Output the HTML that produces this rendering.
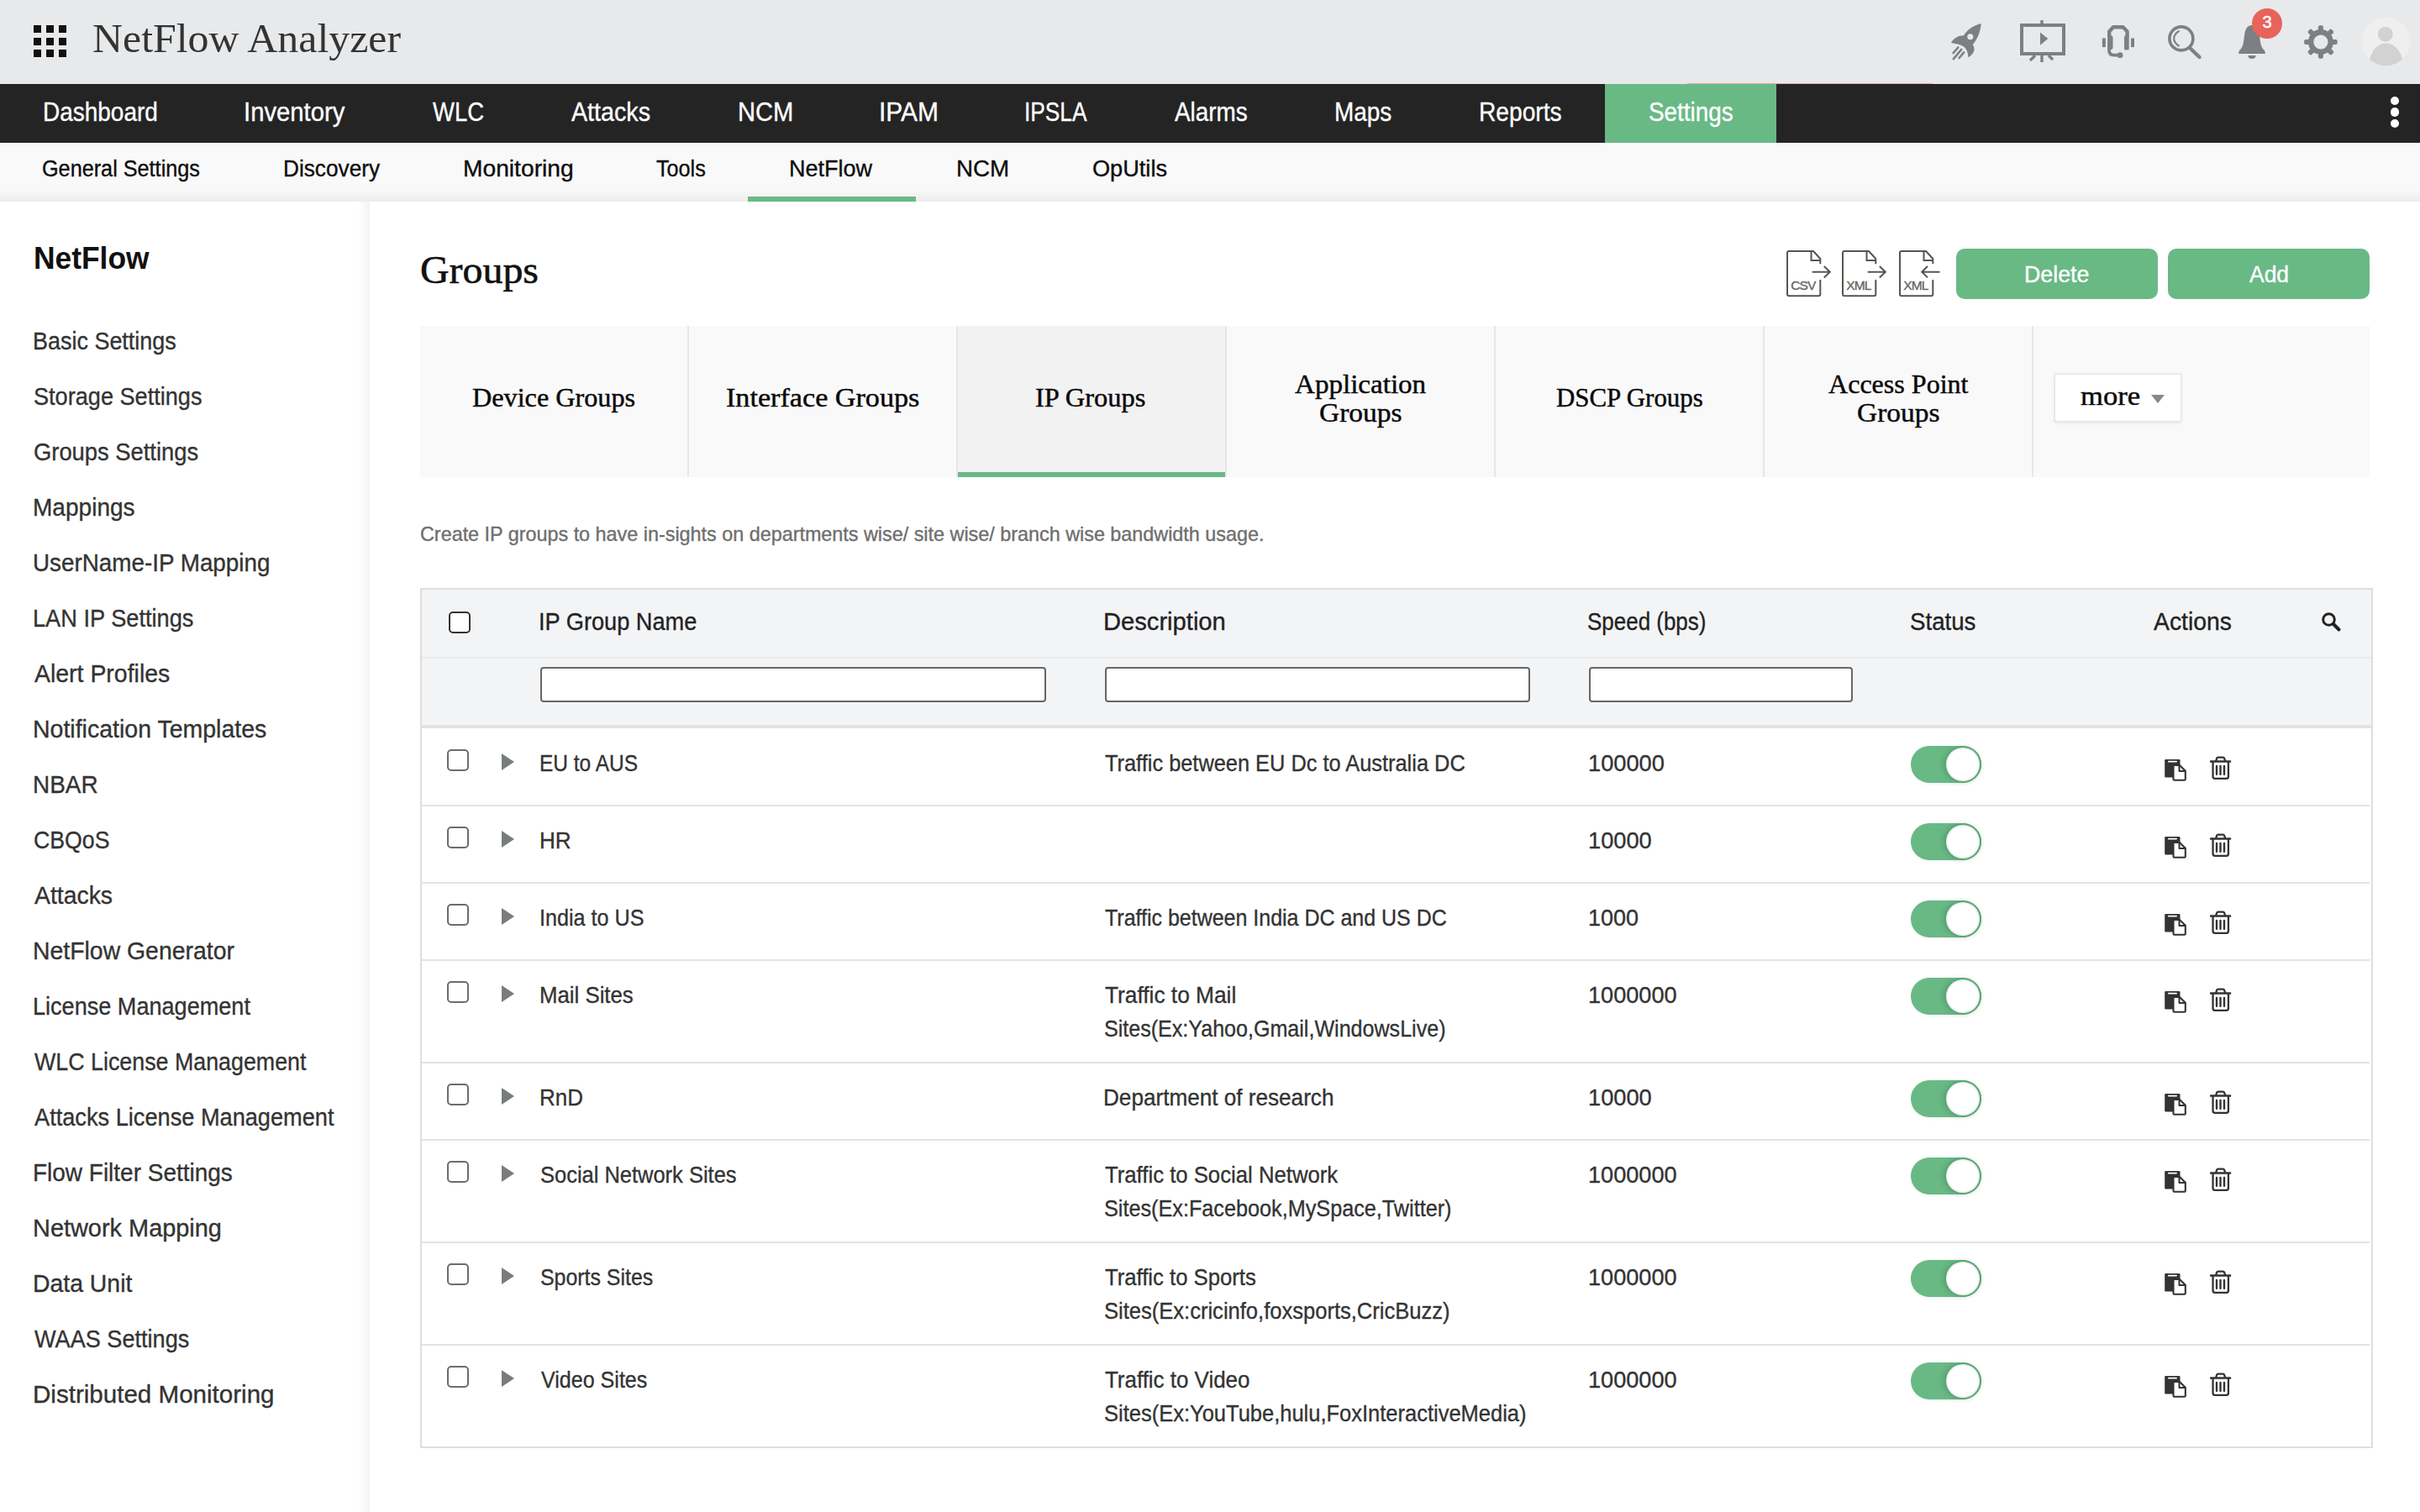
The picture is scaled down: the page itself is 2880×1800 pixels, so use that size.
<!DOCTYPE html>
<html><head><meta charset="utf-8"><title>NetFlow Analyzer</title>
<style>
*{box-sizing:border-box;margin:0;padding:0}
html,body{width:2880px;height:1800px;overflow:hidden;background:#fff;font-family:"Liberation Sans",sans-serif;}
.a{position:absolute;white-space:nowrap}
.tx{-webkit-text-stroke:0.35px currentColor}
#hdr{position:absolute;left:0;top:0;width:2880px;height:100px;background:#e8e9eb}
#nav{position:absolute;left:0;top:100px;width:2880px;height:70px;background:#242424}
.nv{position:absolute;top:0;height:70px;color:#fff;font-size:30px;line-height:70px;text-align:center;letter-spacing:-0.9px;white-space:nowrap}
.nact{background:#69b985}
#sub{position:absolute;left:0;top:170px;width:2880px;height:70px;background:linear-gradient(#f9f9f9 0,#f9f9f9 56px,#ededed 70px)}
.sv{position:absolute;top:0;height:70px;color:#111;font-size:27px;line-height:70px;text-align:center;letter-spacing:-0.7px;white-space:nowrap}
#side{position:absolute;left:0;top:240px;width:440px;height:1560px;background:#fff;box-shadow:inset -16px 0 14px -12px rgba(0,0,0,0.07)}
.sh{position:absolute;left:40px;font-size:36px;font-weight:bold;color:#111;letter-spacing:-0.2px}
.si{position:absolute;left:40px;font-size:28px;color:#333;letter-spacing:-0.6px;white-space:nowrap;line-height:34px}
.serif{font-family:"Liberation Serif",serif}
.btn{position:absolute;top:296px;width:240px;height:60px;border-radius:10px;background:#69b985;color:#fff;font-size:28px;line-height:60px;text-align:center;letter-spacing:-0.5px}
#tabs{position:absolute;left:500px;top:388px;width:2320px;height:180px;background:#f9f9f9}
.tb{position:absolute;top:0;height:180px;width:320px;border-right:2px solid #e6e6e6;display:flex;align-items:center;justify-content:center;text-align:center;font-family:"Liberation Serif",serif;font-size:32px;line-height:34px;color:#111}
.tact{background:#f2f2f2}
.desc{position:absolute;left:500px;font-size:24px;color:#666;letter-spacing:-0.3px;line-height:30px}
#tbl{position:absolute;left:500px;top:700px;width:2322px;height:1023px;border:2px solid #e3e3e3}
.th{position:absolute;font-size:28px;color:#222;letter-spacing:-0.6px;line-height:34px}
.inp{position:absolute;top:794px;height:42px;border:2px solid #666;border-radius:4px;background:#fff}
.row{position:absolute;left:502px;width:2318px;border-top:2px solid #e3e3e3}
.td{position:absolute;font-size:28px;color:#333;letter-spacing:-0.6px;line-height:40px;white-space:nowrap}
.cb{position:absolute;width:26px;height:26px;border:2px solid #6c6c6c;border-radius:5px;background:#fff}
.tri{position:absolute;width:0;height:0;border-top:10px solid transparent;border-bottom:10px solid transparent;border-left:15px solid #787c7b}
.tg{position:absolute;width:84px;height:44px;border-radius:22px;background:#69b985}
.tg{box-shadow:1px 1px 5px rgba(0,0,0,0.07)}
.tg i{position:absolute;right:2px;top:2px;width:40px;height:40px;border-radius:50%;background:#fff;box-shadow:inset 0 0 1px 1.5px rgba(0,0,0,0.07), 0 0 0 2px #58a874, -3px 0 7px rgba(0,60,20,0.20)}
@media (max-width:1500px){html{zoom:0.5}}
</style></head>
<body>

<div id="hdr">
<div class="a" style="left:40px;top:30px;width:9px;height:9px;background:#111"></div><div class="a" style="left:55px;top:30px;width:9px;height:9px;background:#111"></div><div class="a" style="left:70px;top:30px;width:9px;height:9px;background:#111"></div><div class="a" style="left:40px;top:45px;width:9px;height:9px;background:#111"></div><div class="a" style="left:55px;top:45px;width:9px;height:9px;background:#111"></div><div class="a" style="left:70px;top:45px;width:9px;height:9px;background:#111"></div><div class="a" style="left:40px;top:59px;width:9px;height:9px;background:#111"></div><div class="a" style="left:55px;top:59px;width:9px;height:9px;background:#111"></div><div class="a" style="left:70px;top:59px;width:9px;height:9px;background:#111"></div>
<div class="a" style="left:109.96px;top:15.80px;font-family:'Liberation Serif';font-size:48px;line-height:60px;color:#333;transform-origin:0 0;transform:scaleX(1.0391);">NetFlow Analyzer</div>
<!-- rocket -->
<svg class="a" style="left:2315px;top:22px" width="50" height="55" viewBox="0 0 50 55">
 <path fill="#7c8085" d="M42.7 6 C36 7.5 27 12 21.8 20.4 C17 20 10 23 6.9 29.1 C12 30 18 31 22 33.5 C25 36 27.3 40 27.3 46.5 C31 44 35 40 34.5 36.4 C34.3 34 33.5 32.5 32.7 31.3 C38 25 42 16 42.7 6 Z"/>
 <circle cx="29.8" cy="21.8" r="3.5" fill="#e8e9eb"/>
 <path stroke="#7c8085" stroke-width="2.6" stroke-linecap="round" d="M9.5 41.1 L15.3 34.5 M9.8 48.2 L19.3 36.9 M16.6 47 L22.2 40.4"/>
</svg>
<!-- presentation -->
<svg class="a" style="left:2402px;top:22px" width="58" height="54" viewBox="0 0 58 54">
 <rect x="4" y="8" width="50" height="34" fill="none" stroke="#7c8085" stroke-width="4"/>
 <rect x="26.3" y="2" width="3.4" height="5" fill="#7c8085"/>
 <path fill="#7c8085" d="M26 16.5 L35.3 24 L26 31.7 Z"/>
 <path stroke="#7c8085" stroke-width="3.4" d="M28 44 V52 M20 44 L14 50 M36 44 L41 49"/>
</svg>
<!-- headset -->
<svg class="a" style="left:2495px;top:25px" width="50" height="50" viewBox="0 0 50 50">
 <path fill="none" stroke="#7c8085" stroke-width="4.4" stroke-linejoin="round" d="M15.2 19 V12.5 L20 7.3 H31.5 L36.6 12.5 V19"/>
 <rect x="13.1" y="17.2" width="6.4" height="16.8" rx="2.5" fill="#7c8085"/>
 <rect x="33" y="17.2" width="5.7" height="17.2" rx="1.5" fill="#7c8085"/>
 <rect x="6.9" y="20.5" width="4" height="10.6" fill="#7c8085"/>
 <rect x="41" y="20.5" width="4" height="10.6" fill="#7c8085"/>
 <path fill="none" stroke="#7c8085" stroke-width="3.8" d="M15 32 V35 C15 39 17 40.7 21 40.7 H27"/>
 <circle cx="28.1" cy="40.7" r="3.4" fill="#7c8085"/>
</svg>
<!-- search -->
<svg class="a" style="left:2576px;top:26px" width="48" height="48" viewBox="0 0 48 48">
 <circle cx="19.9" cy="19.9" r="14" fill="none" stroke="#7c8085" stroke-width="3.6"/>
 <path fill="none" stroke="#7c8085" stroke-width="2.2" d="M17.6 10.8 C13 13.5 11.2 16.5 11.2 19.9 C11.2 23.3 13 26.3 17.6 29"/>
 <path stroke="#7c8085" stroke-width="4.4" stroke-linecap="round" d="M30 31 L41.5 42"/>
</svg>
<!-- bell -->
<svg class="a" style="left:2660px;top:26px" width="42" height="48" viewBox="0 0 42 48">
 <path fill="#7c8085" d="M20 4 C14 4 12 9 11 16 C10 26 9 31 5 34 L4 38 H36 L35 34 C31 31 30 26 29 16 C28 9 26 4 20 4 Z"/>
 <path fill="#7c8085" d="M15.5 40 H24.5 C24.5 43 22.5 44 20 44 C17.5 44 15.5 43 15.5 40 Z"/>
</svg>
<div class="a" style="left:2680px;top:9.6px;width:36px;height:36px;border-radius:50%;background:#e8635a;color:#fff;font-size:20px;line-height:33px;text-align:center;-webkit-text-stroke:0.6px #fff">3</div>
<!-- gear -->
<svg class="a" style="left:2738px;top:26px" width="48" height="48" viewBox="0 0 48 48">
 <g transform="translate(23.9,24)" fill="#7c8085">
  <rect x="-3" y="-19.8" width="6" height="39.6" rx="2"/>
  <rect x="-3" y="-19.8" width="6" height="39.6" rx="2" transform="rotate(45)"/>
  <rect x="-3" y="-19.8" width="6" height="39.6" rx="2" transform="rotate(90)"/>
  <rect x="-3" y="-19.8" width="6" height="39.6" rx="2" transform="rotate(135)"/>
  <circle r="15"/>
  <circle r="8.6" fill="#e8e9eb"/>
 </g>
</svg>
<!-- avatar -->
<svg class="a" style="left:2810px;top:20px" width="60" height="60" viewBox="0 0 60 60">
 <defs><clipPath id="avc"><circle cx="29.4" cy="29.4" r="28.7"/></clipPath></defs>
 <circle cx="29.4" cy="29.4" r="28.7" fill="#efefef"/>
 <g clip-path="url(#avc)" fill="#d2d2d2">
  <circle cx="28.8" cy="20.7" r="9"/>
  <ellipse cx="29.6" cy="58" rx="20.3" ry="26.5"/>
 </g>
</svg>
</div>
<div class="a" style="left:0;top:100px;width:2880px;height:70px;background:#242424"></div><div class="a" style="left:2008px;top:99px;width:292px;height:1px;background:#e6aca5"></div><div class="a" style="left:1910px;top:100px;width:203.6px;height:70px;background:#69b985"></div><div class="a tx" style="left:50.80px;top:113.86px;font-family:'Liberation Sans';font-size:31px;line-height:39px;color:#fff;transform-origin:0 0;transform:scaleX(0.9022);">Dashboard</div><div class="a tx" style="left:289.71px;top:113.86px;font-family:'Liberation Sans';font-size:31px;line-height:39px;color:#fff;transform-origin:0 0;transform:scaleX(0.9444);">Inventory</div><div class="a tx" style="left:514.70px;top:113.86px;font-family:'Liberation Sans';font-size:31px;line-height:39px;color:#fff;transform-origin:0 0;transform:scaleX(0.8861);">WLC</div><div class="a tx" style="left:680.00px;top:113.86px;font-family:'Liberation Sans';font-size:31px;line-height:39px;color:#fff;transform-origin:0 0;transform:scaleX(0.9244);">Attacks</div><div class="a tx" style="left:877.82px;top:113.86px;font-family:'Liberation Sans';font-size:31px;line-height:39px;color:#fff;transform-origin:0 0;transform:scaleX(0.9390);">NCM</div><div class="a tx" style="left:1046.47px;top:113.86px;font-family:'Liberation Sans';font-size:31px;line-height:39px;color:#fff;transform-origin:0 0;transform:scaleX(0.9660);">IPAM</div><div class="a tx" style="left:1219.31px;top:113.86px;font-family:'Liberation Sans';font-size:31px;line-height:39px;color:#fff;transform-origin:0 0;transform:scaleX(0.8468);">IPSLA</div><div class="a tx" style="left:1398.40px;top:113.86px;font-family:'Liberation Sans';font-size:31px;line-height:39px;color:#fff;transform-origin:0 0;transform:scaleX(0.8984);">Alarms</div><div class="a tx" style="left:1588.20px;top:113.86px;font-family:'Liberation Sans';font-size:31px;line-height:39px;color:#fff;transform-origin:0 0;transform:scaleX(0.9004);">Maps</div><div class="a tx" style="left:1760.18px;top:113.86px;font-family:'Liberation Sans';font-size:31px;line-height:39px;color:#fff;transform-origin:0 0;transform:scaleX(0.9081);">Reports</div><div class="a tx" style="left:1961.50px;top:113.86px;font-family:'Liberation Sans';font-size:31px;line-height:39px;color:#fff;transform-origin:0 0;transform:scaleX(0.8995);">Settings</div><div class="a" style="left:2845px;top:114.7px;width:10.2px;height:10.2px;border-radius:50%;background:#fff"></div><div class="a" style="left:2845px;top:128.4px;width:10.2px;height:10.2px;border-radius:50%;background:#fff"></div><div class="a" style="left:2845px;top:142.1px;width:10.2px;height:10.2px;border-radius:50%;background:#fff"></div><div class="a" style="left:0;top:170px;width:2880px;height:70px;background:linear-gradient(#f9f9f9 0,#f9f9f9 56px,#ececec 70px)"></div><div class="a tx" style="left:49.87px;top:183.84px;font-family:'Liberation Sans';font-size:27px;line-height:34px;color:#0d0d0d;transform-origin:0 0;transform:scaleX(0.9343);">General Settings</div><div class="a tx" style="left:336.66px;top:183.84px;font-family:'Liberation Sans';font-size:27px;line-height:34px;color:#0d0d0d;transform-origin:0 0;transform:scaleX(0.9708);">Discovery</div><div class="a tx" style="left:550.71px;top:183.84px;font-family:'Liberation Sans';font-size:27px;line-height:34px;color:#0d0d0d;transform-origin:0 0;transform:scaleX(1.0443);">Monitoring</div><div class="a tx" style="left:781.30px;top:183.84px;font-family:'Liberation Sans';font-size:27px;line-height:34px;color:#0d0d0d;transform-origin:0 0;transform:scaleX(0.9323);">Tools</div><div class="a tx" style="left:939.20px;top:183.84px;font-family:'Liberation Sans';font-size:27px;line-height:34px;color:#0d0d0d;transform-origin:0 0;transform:scaleX(0.9987);">NetFlow</div><div class="a tx" style="left:1137.95px;top:183.84px;font-family:'Liberation Sans';font-size:27px;line-height:34px;color:#0d0d0d;transform-origin:0 0;transform:scaleX(1.0259);">NCM</div><div class="a tx" style="left:1299.69px;top:183.84px;font-family:'Liberation Sans';font-size:27px;line-height:34px;color:#0d0d0d;transform-origin:0 0;transform:scaleX(1.0056);">OpUtils</div><div class="a" style="left:890px;top:234px;width:200px;height:6px;background:#69b985"></div><div class="a" style="left:0;top:240px;width:440px;height:1560px;background:#fff;box-shadow:inset -16px 0 14px -12px rgba(0,0,0,0.07)"></div><div class="a" style="left:40.23px;top:284.83px;font-family:'Liberation Sans';font-size:36px;line-height:45px;color:#111;transform-origin:0 0;transform:scaleX(0.9828);font-weight:bold;">NetFlow</div><div class="a tx" style="left:39.10px;top:386.91px;font-family:'Liberation Sans';font-size:30px;line-height:38px;color:#333;transform-origin:0 0;transform:scaleX(0.8985);">Basic Settings</div><div class="a tx" style="left:40.00px;top:452.91px;font-family:'Liberation Sans';font-size:30px;line-height:38px;color:#333;transform-origin:0 0;transform:scaleX(0.9040);">Storage Settings</div><div class="a tx" style="left:39.99px;top:518.90px;font-family:'Liberation Sans';font-size:30px;line-height:38px;color:#333;transform-origin:0 0;transform:scaleX(0.9117);">Groups Settings</div><div class="a tx" style="left:39.03px;top:584.90px;font-family:'Liberation Sans';font-size:30px;line-height:38px;color:#333;transform-origin:0 0;transform:scaleX(0.9349);">Mappings</div><div class="a tx" style="left:39.05px;top:650.90px;font-family:'Liberation Sans';font-size:30px;line-height:38px;color:#333;transform-origin:0 0;transform:scaleX(0.9273);">UserName-IP Mapping</div><div class="a tx" style="left:39.09px;top:716.90px;font-family:'Liberation Sans';font-size:30px;line-height:38px;color:#333;transform-origin:0 0;transform:scaleX(0.9058);">LAN IP Settings</div><div class="a tx" style="left:40.90px;top:782.90px;font-family:'Liberation Sans';font-size:30px;line-height:38px;color:#333;transform-origin:0 0;transform:scaleX(0.9482);">Alert Profiles</div><div class="a tx" style="left:39.00px;top:848.90px;font-family:'Liberation Sans';font-size:30px;line-height:38px;color:#333;transform-origin:0 0;transform:scaleX(0.9502);">Notification Templates</div><div class="a tx" style="left:39.04px;top:914.90px;font-family:'Liberation Sans';font-size:30px;line-height:38px;color:#333;transform-origin:0 0;transform:scaleX(0.9308);">NBAR</div><div class="a tx" style="left:40.01px;top:980.90px;font-family:'Liberation Sans';font-size:30px;line-height:38px;color:#333;transform-origin:0 0;transform:scaleX(0.8897);">CBQoS</div><div class="a tx" style="left:40.90px;top:1046.90px;font-family:'Liberation Sans';font-size:30px;line-height:38px;color:#333;transform-origin:0 0;transform:scaleX(0.9459);">Attacks</div><div class="a tx" style="left:39.01px;top:1112.90px;font-family:'Liberation Sans';font-size:30px;line-height:38px;color:#333;transform-origin:0 0;transform:scaleX(0.9465);">NetFlow Generator</div><div class="a tx" style="left:39.09px;top:1178.90px;font-family:'Liberation Sans';font-size:30px;line-height:38px;color:#333;transform-origin:0 0;transform:scaleX(0.9026);">License Management</div><div class="a tx" style="left:40.90px;top:1244.90px;font-family:'Liberation Sans';font-size:30px;line-height:38px;color:#333;transform-origin:0 0;transform:scaleX(0.8940);">WLC License Management</div><div class="a tx" style="left:40.90px;top:1310.90px;font-family:'Liberation Sans';font-size:30px;line-height:38px;color:#333;transform-origin:0 0;transform:scaleX(0.9059);">Attacks License Management</div><div class="a tx" style="left:39.04px;top:1376.90px;font-family:'Liberation Sans';font-size:30px;line-height:38px;color:#333;transform-origin:0 0;transform:scaleX(0.9323);">Flow Filter Settings</div><div class="a tx" style="left:38.97px;top:1442.90px;font-family:'Liberation Sans';font-size:30px;line-height:38px;color:#333;transform-origin:0 0;transform:scaleX(0.9636);">Network Mapping</div><div class="a tx" style="left:39.01px;top:1508.90px;font-family:'Liberation Sans';font-size:30px;line-height:38px;color:#333;transform-origin:0 0;transform:scaleX(0.9465);">Data Unit</div><div class="a tx" style="left:40.90px;top:1574.90px;font-family:'Liberation Sans';font-size:30px;line-height:38px;color:#333;transform-origin:0 0;transform:scaleX(0.9036);">WAAS Settings</div><div class="a tx" style="left:38.93px;top:1640.90px;font-family:'Liberation Sans';font-size:30px;line-height:38px;color:#333;transform-origin:0 0;transform:scaleX(0.9854);">Distributed Monitoring</div><div class="a" style="left:499.96px;top:293.08px;font-family:'Liberation Serif';font-size:46px;line-height:58px;color:#111;transform-origin:0 0;transform:scaleX(1.0409);-webkit-text-stroke:0.6px currentColor;">Groups</div><svg class="a" style="left:2126.1000000000004px;top:298.1px" width="56" height="58" viewBox="-1 -1 56 58">
 <path fill="none" stroke="#555" stroke-width="2" stroke-linejoin="round" d="M39.3 15.2 V9 L31 0 H2 Q0 0 0 2 V51.3 Q0 53.3 2 53.3 H37.3 Q39.3 53.3 39.3 51.3 V34"/>
 <path fill="none" stroke="#555" stroke-width="2" d="M28.5 0 V11.1 H39.3"/>
 <path fill="none" stroke="#555" stroke-width="2" d="M29.7 24.8 H51 M43.8 18 L50.8 24.8 L43.8 31.4"/>
 <text x="4.3" y="45.6" font-family="Liberation Sans" font-size="15.5" fill="#666" stroke="#666" stroke-width="0.35" letter-spacing="-0.9">CSV</text>
</svg><svg class="a" style="left:2192.2000000000003px;top:298.1px" width="56" height="58" viewBox="-1 -1 56 58">
 <path fill="none" stroke="#555" stroke-width="2" stroke-linejoin="round" d="M39.3 15.2 V9 L31 0 H2 Q0 0 0 2 V51.3 Q0 53.3 2 53.3 H37.3 Q39.3 53.3 39.3 51.3 V34"/>
 <path fill="none" stroke="#555" stroke-width="2" d="M28.5 0 V11.1 H39.3"/>
 <path fill="none" stroke="#555" stroke-width="2" d="M29.7 24.8 H51 M43.8 18 L50.8 24.8 L43.8 31.4"/>
 <text x="4.3" y="45.6" font-family="Liberation Sans" font-size="15.5" fill="#666" stroke="#666" stroke-width="0.35" letter-spacing="-0.9">XML</text>
</svg><svg class="a" style="left:2260.0px;top:298.1px" width="56" height="58" viewBox="-1 -1 56 58">
 <path fill="none" stroke="#555" stroke-width="2" stroke-linejoin="round" d="M39.3 15.2 V9 L31 0 H2 Q0 0 0 2 V51.3 Q0 53.3 2 53.3 H37.3 Q39.3 53.3 39.3 51.3 V34"/>
 <path fill="none" stroke="#555" stroke-width="2" d="M28.5 0 V11.1 H39.3"/>
 <path fill="none" stroke="#555" stroke-width="2" d="M47.5 24.8 H26 M33 18 L26.2 24.8 L33 31.4"/>
 <text x="4.3" y="45.6" font-family="Liberation Sans" font-size="15.5" fill="#666" stroke="#666" stroke-width="0.35" letter-spacing="-0.9">XML</text>
</svg><div class="a" style="left:2328px;top:296px;width:240px;height:60px;border-radius:10px;background:#69b985"></div><div class="a" style="left:2580px;top:296px;width:240px;height:60px;border-radius:10px;background:#69b985"></div><div class="a tx" style="left:2409.09px;top:308.70px;font-family:'Liberation Sans';font-size:28px;line-height:35px;color:#fff;transform-origin:0 0;transform:scaleX(0.9571);">Delete</div><div class="a tx" style="left:2676.70px;top:308.70px;font-family:'Liberation Sans';font-size:28px;line-height:35px;color:#fff;transform-origin:0 0;transform:scaleX(0.9451);">Add</div><div class="a" style="left:500px;top:388px;width:2320px;height:180px;background:#f9f9f9"></div><div class="a" style="left:1139px;top:388px;width:320px;height:180px;background:#f2f2f2"></div><div class="a" style="left:818px;top:388px;width:2px;height:180px;background:#e7e7e7"></div><div class="a" style="left:1137.5px;top:388px;width:2px;height:180px;background:#e7e7e7"></div><div class="a" style="left:1457.8px;top:388px;width:2px;height:180px;background:#e7e7e7"></div><div class="a" style="left:1778px;top:388px;width:2px;height:180px;background:#e7e7e7"></div><div class="a" style="left:2097.8px;top:388px;width:2px;height:180px;background:#e7e7e7"></div><div class="a" style="left:2417.8px;top:388px;width:2px;height:180px;background:#e7e7e7"></div><div class="a" style="left:1139.5px;top:562px;width:318.5px;height:6px;background:#69b985"></div><div class="a" style="left:562.00px;top:454.34px;font-family:'Liberation Serif';font-size:31px;line-height:39px;color:#0a0a0a;transform-origin:0 0;transform:scaleX(1.0391);-webkit-text-stroke:0.45px currentColor;">Device Groups</div><div class="a" style="left:863.70px;top:454.34px;font-family:'Liberation Serif';font-size:31px;line-height:39px;color:#0a0a0a;transform-origin:0 0;transform:scaleX(1.1015);-webkit-text-stroke:0.45px currentColor;">Interface Groups</div><div class="a" style="left:1232.45px;top:454.34px;font-family:'Liberation Serif';font-size:31px;line-height:39px;color:#0a0a0a;transform-origin:0 0;transform:scaleX(1.0472);-webkit-text-stroke:0.45px currentColor;">IP Groups</div><div class="a" style="left:1540.50px;top:438.24px;font-family:'Liberation Serif';font-size:31px;line-height:39px;color:#0a0a0a;transform-origin:0 0;transform:scaleX(1.0670);-webkit-text-stroke:0.45px currentColor;">Application</div><div class="a" style="left:1569.62px;top:471.84px;font-family:'Liberation Serif';font-size:31px;line-height:39px;color:#0a0a0a;transform-origin:0 0;transform:scaleX(1.0795);-webkit-text-stroke:0.45px currentColor;">Groups</div><div class="a" style="left:1851.80px;top:454.34px;font-family:'Liberation Serif';font-size:31px;line-height:39px;color:#0a0a0a;transform-origin:0 0;transform:scaleX(0.9960);-webkit-text-stroke:0.45px currentColor;">DSCP Groups</div><div class="a" style="left:2175.90px;top:438.24px;font-family:'Liberation Serif';font-size:31px;line-height:39px;color:#0a0a0a;transform-origin:0 0;transform:scaleX(1.0341);-webkit-text-stroke:0.45px currentColor;">Access Point</div><div class="a" style="left:2210.12px;top:471.84px;font-family:'Liberation Serif';font-size:31px;line-height:39px;color:#0a0a0a;transform-origin:0 0;transform:scaleX(1.0783);-webkit-text-stroke:0.45px currentColor;">Groups</div><div class="a" style="left:2445.5px;top:445.5px;width:149px;height:55px;background:#fff;box-shadow:0 0 0 1.5px #e6e6e6, 0 2px 4px rgba(0,0,0,0.10)"></div><div class="a" style="left:2475.70px;top:451.94px;font-family:'Liberation Serif';font-size:31px;line-height:39px;color:#0a0a0a;transform-origin:0 0;transform:scaleX(1.1170);-webkit-text-stroke:0.45px currentColor;">more</div><div class="a" style="left:2560px;top:470px;width:0;height:0;border-left:8px solid transparent;border-right:8px solid transparent;border-top:10px solid #888"></div><div class="a tx" style="left:499.53px;top:620.88px;font-family:'Liberation Sans';font-size:24px;line-height:30px;color:#6e6e6e;transform-origin:0 0;transform:scaleX(0.9732);">Create IP groups to have in-sights on departments wise/ site wise/ branch wise bandwidth usage.</div><div class="a" style="left:500px;top:700px;width:2324px;height:1024px;border:2px solid #dedede"></div><div class="a" style="left:502px;top:702px;width:2320px;height:162px;background:#f3f4f6"></div><div class="a" style="left:502px;top:781.5px;width:2320px;height:2px;background:#e9eaec"></div><div class="a" style="left:502px;top:863px;width:2320px;height:4px;background:#e1e2e4"></div><div class="cb" style="left:534px;top:728px;border-color:#333"></div><div class="a tx" style="left:641.19px;top:720.90px;font-family:'Liberation Sans';font-size:30px;line-height:38px;color:#222;transform-origin:0 0;transform:scaleX(0.9060);">IP Group Name</div><div class="a tx" style="left:1312.76px;top:720.90px;font-family:'Liberation Sans';font-size:30px;line-height:38px;color:#222;transform-origin:0 0;transform:scaleX(0.9715);">Description</div><div class="a tx" style="left:1889.13px;top:720.90px;font-family:'Liberation Sans';font-size:30px;line-height:38px;color:#222;transform-origin:0 0;transform:scaleX(0.8653);">Speed (bps)</div><div class="a tx" style="left:2273.48px;top:720.90px;font-family:'Liberation Sans';font-size:30px;line-height:38px;color:#222;transform-origin:0 0;transform:scaleX(0.9223);">Status</div><div class="a tx" style="left:2562.60px;top:720.90px;font-family:'Liberation Sans';font-size:30px;line-height:38px;color:#222;transform-origin:0 0;transform:scaleX(0.9437);">Actions</div><svg class="a" style="left:2762px;top:728px" width="26" height="26" viewBox="0 0 26 26">
 <circle cx="9.5" cy="9.5" r="6.8" fill="none" stroke="#222" stroke-width="3"/>
 <path stroke="#222" stroke-width="4" stroke-linecap="round" d="M15 15 L21.5 21.5"/></svg><div class="inp" style="left:642.6px;width:602.7px"></div><div class="inp" style="left:1314.7px;width:506.3px"></div><div class="inp" style="left:1891px;width:314.0px"></div><div class="cb" style="left:532px;top:892px"></div><div class="tri" style="left:597px;top:896.5px"></div><div class="a tx" style="left:641.75px;top:891.10px;font-family:'Liberation Sans';font-size:28px;line-height:35px;color:#333;transform-origin:0 0;transform:scaleX(0.8741);">EU to AUS</div><div class="a tx" style="left:1314.60px;top:891.10px;font-family:'Liberation Sans';font-size:28px;line-height:35px;color:#333;transform-origin:0 0;transform:scaleX(0.9062);">Traffic between EU Dc to Australia DC</div><div class="a tx" style="left:1889.95px;top:891.10px;font-family:'Liberation Sans';font-size:28px;line-height:35px;color:#333;transform-origin:0 0;transform:scaleX(0.9729);">100000</div><div class="tg" style="left:2274px;top:888px"><i></i></div><svg class="a" style="left:2575px;top:903px" width="30" height="30" viewBox="0 0 30 30">
 <rect x="1.2" y="0.9" width="18.3" height="21.7" rx="1.3" fill="#333"/>
 <rect x="4.9" y="2.7" width="11.1" height="1.7" rx="0.8" fill="#fff"/>
 <path fill="#fff" stroke="#333" stroke-width="2.1" stroke-linejoin="round" d="M11.5 7.9 H18.9 L25.8 14.8 V24.7 Q25.8 25.7 24.8 25.7 H12.5 Q11.5 25.7 11.5 24.7 Z"/>
 <path fill="none" stroke="#333" stroke-width="2" stroke-linejoin="round" d="M18.5 7.9 V14.9 H25.8"/>
</svg><svg class="a" style="left:2630px;top:900px" width="28" height="30" viewBox="0 0 28 30">
 <path fill="none" stroke="#333" stroke-width="2.3" stroke-linejoin="round" d="M7 6.5 L8.2 2.6 Q8.6 1.6 9.7 1.6 H15.6 Q16.7 1.6 17.1 2.6 L18.3 6.5"/>
 <rect x="0" y="5.3" width="25.2" height="2.5" rx="0.6" fill="#333"/>
 <path fill="none" stroke="#333" stroke-width="2.3" d="M3.55 7 V24.6 Q3.55 26.9 5.8 26.9 H19.7 Q21.95 26.9 21.95 24.6 V7"/>
 <path stroke="#333" stroke-width="2.4" stroke-linecap="round" d="M8 12 V21.7 M12.5 12 V21.7 M17 12 V21.7"/>
</svg><div class="a" style="left:502px;top:957.5px;width:2318px;height:2px;background:#e3e3e3"></div><div class="cb" style="left:532px;top:984px"></div><div class="tri" style="left:597px;top:988.5px"></div><div class="a tx" style="left:641.64px;top:983.10px;font-family:'Liberation Sans';font-size:28px;line-height:35px;color:#333;transform-origin:0 0;transform:scaleX(0.9323);">HR</div><div class="a tx" style="left:1889.96px;top:983.10px;font-family:'Liberation Sans';font-size:28px;line-height:35px;color:#333;transform-origin:0 0;transform:scaleX(0.9723);">10000</div><div class="tg" style="left:2274px;top:980px"><i></i></div><svg class="a" style="left:2575px;top:995px" width="30" height="30" viewBox="0 0 30 30">
 <rect x="1.2" y="0.9" width="18.3" height="21.7" rx="1.3" fill="#333"/>
 <rect x="4.9" y="2.7" width="11.1" height="1.7" rx="0.8" fill="#fff"/>
 <path fill="#fff" stroke="#333" stroke-width="2.1" stroke-linejoin="round" d="M11.5 7.9 H18.9 L25.8 14.8 V24.7 Q25.8 25.7 24.8 25.7 H12.5 Q11.5 25.7 11.5 24.7 Z"/>
 <path fill="none" stroke="#333" stroke-width="2" stroke-linejoin="round" d="M18.5 7.9 V14.9 H25.8"/>
</svg><svg class="a" style="left:2630px;top:992px" width="28" height="30" viewBox="0 0 28 30">
 <path fill="none" stroke="#333" stroke-width="2.3" stroke-linejoin="round" d="M7 6.5 L8.2 2.6 Q8.6 1.6 9.7 1.6 H15.6 Q16.7 1.6 17.1 2.6 L18.3 6.5"/>
 <rect x="0" y="5.3" width="25.2" height="2.5" rx="0.6" fill="#333"/>
 <path fill="none" stroke="#333" stroke-width="2.3" d="M3.55 7 V24.6 Q3.55 26.9 5.8 26.9 H19.7 Q21.95 26.9 21.95 24.6 V7"/>
 <path stroke="#333" stroke-width="2.4" stroke-linecap="round" d="M8 12 V21.7 M12.5 12 V21.7 M17 12 V21.7"/>
</svg><div class="a" style="left:502px;top:1049.5px;width:2318px;height:2px;background:#e3e3e3"></div><div class="cb" style="left:532px;top:1076px"></div><div class="tri" style="left:597px;top:1080.5px"></div><div class="a tx" style="left:641.70px;top:1075.10px;font-family:'Liberation Sans';font-size:28px;line-height:35px;color:#333;transform-origin:0 0;transform:scaleX(0.8981);">India to US</div><div class="a tx" style="left:1314.60px;top:1075.10px;font-family:'Liberation Sans';font-size:28px;line-height:35px;color:#333;transform-origin:0 0;transform:scaleX(0.8921);">Traffic between India DC and US DC</div><div class="a tx" style="left:1889.97px;top:1075.10px;font-family:'Liberation Sans';font-size:28px;line-height:35px;color:#333;transform-origin:0 0;transform:scaleX(0.9629);">1000</div><div class="tg" style="left:2274px;top:1072px"><i></i></div><svg class="a" style="left:2575px;top:1087px" width="30" height="30" viewBox="0 0 30 30">
 <rect x="1.2" y="0.9" width="18.3" height="21.7" rx="1.3" fill="#333"/>
 <rect x="4.9" y="2.7" width="11.1" height="1.7" rx="0.8" fill="#fff"/>
 <path fill="#fff" stroke="#333" stroke-width="2.1" stroke-linejoin="round" d="M11.5 7.9 H18.9 L25.8 14.8 V24.7 Q25.8 25.7 24.8 25.7 H12.5 Q11.5 25.7 11.5 24.7 Z"/>
 <path fill="none" stroke="#333" stroke-width="2" stroke-linejoin="round" d="M18.5 7.9 V14.9 H25.8"/>
</svg><svg class="a" style="left:2630px;top:1084px" width="28" height="30" viewBox="0 0 28 30">
 <path fill="none" stroke="#333" stroke-width="2.3" stroke-linejoin="round" d="M7 6.5 L8.2 2.6 Q8.6 1.6 9.7 1.6 H15.6 Q16.7 1.6 17.1 2.6 L18.3 6.5"/>
 <rect x="0" y="5.3" width="25.2" height="2.5" rx="0.6" fill="#333"/>
 <path fill="none" stroke="#333" stroke-width="2.3" d="M3.55 7 V24.6 Q3.55 26.9 5.8 26.9 H19.7 Q21.95 26.9 21.95 24.6 V7"/>
 <path stroke="#333" stroke-width="2.4" stroke-linecap="round" d="M8 12 V21.7 M12.5 12 V21.7 M17 12 V21.7"/>
</svg><div class="a" style="left:502px;top:1141.5px;width:2318px;height:2px;background:#e3e3e3"></div><div class="cb" style="left:532px;top:1168px"></div><div class="tri" style="left:597px;top:1172.5px"></div><div class="a tx" style="left:641.66px;top:1167.10px;font-family:'Liberation Sans';font-size:28px;line-height:35px;color:#333;transform-origin:0 0;transform:scaleX(0.9209);">Mail Sites</div><div class="a tx" style="left:1314.60px;top:1167.10px;font-family:'Liberation Sans';font-size:28px;line-height:35px;color:#333;transform-origin:0 0;transform:scaleX(0.9385);">Traffic to Mail</div><div class="a tx" style="left:1313.70px;top:1207.10px;font-family:'Liberation Sans';font-size:28px;line-height:35px;color:#333;transform-origin:0 0;transform:scaleX(0.8956);">Sites(Ex:Yahoo,Gmail,WindowsLive)</div><div class="a tx" style="left:1889.96px;top:1167.10px;font-family:'Liberation Sans';font-size:28px;line-height:35px;color:#333;transform-origin:0 0;transform:scaleX(0.9687);">1000000</div><div class="tg" style="left:2274px;top:1164px"><i></i></div><svg class="a" style="left:2575px;top:1179px" width="30" height="30" viewBox="0 0 30 30">
 <rect x="1.2" y="0.9" width="18.3" height="21.7" rx="1.3" fill="#333"/>
 <rect x="4.9" y="2.7" width="11.1" height="1.7" rx="0.8" fill="#fff"/>
 <path fill="#fff" stroke="#333" stroke-width="2.1" stroke-linejoin="round" d="M11.5 7.9 H18.9 L25.8 14.8 V24.7 Q25.8 25.7 24.8 25.7 H12.5 Q11.5 25.7 11.5 24.7 Z"/>
 <path fill="none" stroke="#333" stroke-width="2" stroke-linejoin="round" d="M18.5 7.9 V14.9 H25.8"/>
</svg><svg class="a" style="left:2630px;top:1176px" width="28" height="30" viewBox="0 0 28 30">
 <path fill="none" stroke="#333" stroke-width="2.3" stroke-linejoin="round" d="M7 6.5 L8.2 2.6 Q8.6 1.6 9.7 1.6 H15.6 Q16.7 1.6 17.1 2.6 L18.3 6.5"/>
 <rect x="0" y="5.3" width="25.2" height="2.5" rx="0.6" fill="#333"/>
 <path fill="none" stroke="#333" stroke-width="2.3" d="M3.55 7 V24.6 Q3.55 26.9 5.8 26.9 H19.7 Q21.95 26.9 21.95 24.6 V7"/>
 <path stroke="#333" stroke-width="2.4" stroke-linecap="round" d="M8 12 V21.7 M12.5 12 V21.7 M17 12 V21.7"/>
</svg><div class="a" style="left:502px;top:1263.5px;width:2318px;height:2px;background:#e3e3e3"></div><div class="cb" style="left:532px;top:1290px"></div><div class="tri" style="left:597px;top:1294.5px"></div><div class="a tx" style="left:641.65px;top:1289.10px;font-family:'Liberation Sans';font-size:28px;line-height:35px;color:#333;transform-origin:0 0;transform:scaleX(0.9263);">RnD</div><div class="a tx" style="left:1312.73px;top:1289.10px;font-family:'Liberation Sans';font-size:28px;line-height:35px;color:#333;transform-origin:0 0;transform:scaleX(0.9330);">Department of research</div><div class="a tx" style="left:1889.96px;top:1289.10px;font-family:'Liberation Sans';font-size:28px;line-height:35px;color:#333;transform-origin:0 0;transform:scaleX(0.9723);">10000</div><div class="tg" style="left:2274px;top:1286px"><i></i></div><svg class="a" style="left:2575px;top:1301px" width="30" height="30" viewBox="0 0 30 30">
 <rect x="1.2" y="0.9" width="18.3" height="21.7" rx="1.3" fill="#333"/>
 <rect x="4.9" y="2.7" width="11.1" height="1.7" rx="0.8" fill="#fff"/>
 <path fill="#fff" stroke="#333" stroke-width="2.1" stroke-linejoin="round" d="M11.5 7.9 H18.9 L25.8 14.8 V24.7 Q25.8 25.7 24.8 25.7 H12.5 Q11.5 25.7 11.5 24.7 Z"/>
 <path fill="none" stroke="#333" stroke-width="2" stroke-linejoin="round" d="M18.5 7.9 V14.9 H25.8"/>
</svg><svg class="a" style="left:2630px;top:1298px" width="28" height="30" viewBox="0 0 28 30">
 <path fill="none" stroke="#333" stroke-width="2.3" stroke-linejoin="round" d="M7 6.5 L8.2 2.6 Q8.6 1.6 9.7 1.6 H15.6 Q16.7 1.6 17.1 2.6 L18.3 6.5"/>
 <rect x="0" y="5.3" width="25.2" height="2.5" rx="0.6" fill="#333"/>
 <path fill="none" stroke="#333" stroke-width="2.3" d="M3.55 7 V24.6 Q3.55 26.9 5.8 26.9 H19.7 Q21.95 26.9 21.95 24.6 V7"/>
 <path stroke="#333" stroke-width="2.4" stroke-linecap="round" d="M8 12 V21.7 M12.5 12 V21.7 M17 12 V21.7"/>
</svg><div class="a" style="left:502px;top:1355.5px;width:2318px;height:2px;background:#e3e3e3"></div><div class="cb" style="left:532px;top:1382px"></div><div class="tri" style="left:597px;top:1386.5px"></div><div class="a tx" style="left:642.59px;top:1381.10px;font-family:'Liberation Sans';font-size:28px;line-height:35px;color:#333;transform-origin:0 0;transform:scaleX(0.9095);">Social Network Sites</div><div class="a tx" style="left:1314.60px;top:1381.10px;font-family:'Liberation Sans';font-size:28px;line-height:35px;color:#333;transform-origin:0 0;transform:scaleX(0.9182);">Traffic to Social Network</div><div class="a tx" style="left:1313.70px;top:1421.10px;font-family:'Liberation Sans';font-size:28px;line-height:35px;color:#333;transform-origin:0 0;transform:scaleX(0.9008);">Sites(Ex:Facebook,MySpace,Twitter)</div><div class="a tx" style="left:1889.96px;top:1381.10px;font-family:'Liberation Sans';font-size:28px;line-height:35px;color:#333;transform-origin:0 0;transform:scaleX(0.9687);">1000000</div><div class="tg" style="left:2274px;top:1378px"><i></i></div><svg class="a" style="left:2575px;top:1393px" width="30" height="30" viewBox="0 0 30 30">
 <rect x="1.2" y="0.9" width="18.3" height="21.7" rx="1.3" fill="#333"/>
 <rect x="4.9" y="2.7" width="11.1" height="1.7" rx="0.8" fill="#fff"/>
 <path fill="#fff" stroke="#333" stroke-width="2.1" stroke-linejoin="round" d="M11.5 7.9 H18.9 L25.8 14.8 V24.7 Q25.8 25.7 24.8 25.7 H12.5 Q11.5 25.7 11.5 24.7 Z"/>
 <path fill="none" stroke="#333" stroke-width="2" stroke-linejoin="round" d="M18.5 7.9 V14.9 H25.8"/>
</svg><svg class="a" style="left:2630px;top:1390px" width="28" height="30" viewBox="0 0 28 30">
 <path fill="none" stroke="#333" stroke-width="2.3" stroke-linejoin="round" d="M7 6.5 L8.2 2.6 Q8.6 1.6 9.7 1.6 H15.6 Q16.7 1.6 17.1 2.6 L18.3 6.5"/>
 <rect x="0" y="5.3" width="25.2" height="2.5" rx="0.6" fill="#333"/>
 <path fill="none" stroke="#333" stroke-width="2.3" d="M3.55 7 V24.6 Q3.55 26.9 5.8 26.9 H19.7 Q21.95 26.9 21.95 24.6 V7"/>
 <path stroke="#333" stroke-width="2.4" stroke-linecap="round" d="M8 12 V21.7 M12.5 12 V21.7 M17 12 V21.7"/>
</svg><div class="a" style="left:502px;top:1477.5px;width:2318px;height:2px;background:#e3e3e3"></div><div class="cb" style="left:532px;top:1504px"></div><div class="tri" style="left:597px;top:1508.5px"></div><div class="a tx" style="left:642.61px;top:1503.10px;font-family:'Liberation Sans';font-size:28px;line-height:35px;color:#333;transform-origin:0 0;transform:scaleX(0.8889);">Sports Sites</div><div class="a tx" style="left:1314.60px;top:1503.10px;font-family:'Liberation Sans';font-size:28px;line-height:35px;color:#333;transform-origin:0 0;transform:scaleX(0.9171);">Traffic to Sports</div><div class="a tx" style="left:1313.69px;top:1543.10px;font-family:'Liberation Sans';font-size:28px;line-height:35px;color:#333;transform-origin:0 0;transform:scaleX(0.9120);">Sites(Ex:cricinfo,foxsports,CricBuzz)</div><div class="a tx" style="left:1889.96px;top:1503.10px;font-family:'Liberation Sans';font-size:28px;line-height:35px;color:#333;transform-origin:0 0;transform:scaleX(0.9687);">1000000</div><div class="tg" style="left:2274px;top:1500px"><i></i></div><svg class="a" style="left:2575px;top:1515px" width="30" height="30" viewBox="0 0 30 30">
 <rect x="1.2" y="0.9" width="18.3" height="21.7" rx="1.3" fill="#333"/>
 <rect x="4.9" y="2.7" width="11.1" height="1.7" rx="0.8" fill="#fff"/>
 <path fill="#fff" stroke="#333" stroke-width="2.1" stroke-linejoin="round" d="M11.5 7.9 H18.9 L25.8 14.8 V24.7 Q25.8 25.7 24.8 25.7 H12.5 Q11.5 25.7 11.5 24.7 Z"/>
 <path fill="none" stroke="#333" stroke-width="2" stroke-linejoin="round" d="M18.5 7.9 V14.9 H25.8"/>
</svg><svg class="a" style="left:2630px;top:1512px" width="28" height="30" viewBox="0 0 28 30">
 <path fill="none" stroke="#333" stroke-width="2.3" stroke-linejoin="round" d="M7 6.5 L8.2 2.6 Q8.6 1.6 9.7 1.6 H15.6 Q16.7 1.6 17.1 2.6 L18.3 6.5"/>
 <rect x="0" y="5.3" width="25.2" height="2.5" rx="0.6" fill="#333"/>
 <path fill="none" stroke="#333" stroke-width="2.3" d="M3.55 7 V24.6 Q3.55 26.9 5.8 26.9 H19.7 Q21.95 26.9 21.95 24.6 V7"/>
 <path stroke="#333" stroke-width="2.4" stroke-linecap="round" d="M8 12 V21.7 M12.5 12 V21.7 M17 12 V21.7"/>
</svg><div class="a" style="left:502px;top:1599.5px;width:2318px;height:2px;background:#e3e3e3"></div><div class="cb" style="left:532px;top:1626px"></div><div class="tri" style="left:597px;top:1630.5px"></div><div class="a tx" style="left:643.50px;top:1625.10px;font-family:'Liberation Sans';font-size:28px;line-height:35px;color:#333;transform-origin:0 0;transform:scaleX(0.8949);">Video Sites</div><div class="a tx" style="left:1314.60px;top:1625.10px;font-family:'Liberation Sans';font-size:28px;line-height:35px;color:#333;transform-origin:0 0;transform:scaleX(0.9258);">Traffic to Video</div><div class="a tx" style="left:1313.69px;top:1665.10px;font-family:'Liberation Sans';font-size:28px;line-height:35px;color:#333;transform-origin:0 0;transform:scaleX(0.9104);">Sites(Ex:YouTube,hulu,FoxInteractiveMedia)</div><div class="a tx" style="left:1889.96px;top:1625.10px;font-family:'Liberation Sans';font-size:28px;line-height:35px;color:#333;transform-origin:0 0;transform:scaleX(0.9687);">1000000</div><div class="tg" style="left:2274px;top:1622px"><i></i></div><svg class="a" style="left:2575px;top:1637px" width="30" height="30" viewBox="0 0 30 30">
 <rect x="1.2" y="0.9" width="18.3" height="21.7" rx="1.3" fill="#333"/>
 <rect x="4.9" y="2.7" width="11.1" height="1.7" rx="0.8" fill="#fff"/>
 <path fill="#fff" stroke="#333" stroke-width="2.1" stroke-linejoin="round" d="M11.5 7.9 H18.9 L25.8 14.8 V24.7 Q25.8 25.7 24.8 25.7 H12.5 Q11.5 25.7 11.5 24.7 Z"/>
 <path fill="none" stroke="#333" stroke-width="2" stroke-linejoin="round" d="M18.5 7.9 V14.9 H25.8"/>
</svg><svg class="a" style="left:2630px;top:1634px" width="28" height="30" viewBox="0 0 28 30">
 <path fill="none" stroke="#333" stroke-width="2.3" stroke-linejoin="round" d="M7 6.5 L8.2 2.6 Q8.6 1.6 9.7 1.6 H15.6 Q16.7 1.6 17.1 2.6 L18.3 6.5"/>
 <rect x="0" y="5.3" width="25.2" height="2.5" rx="0.6" fill="#333"/>
 <path fill="none" stroke="#333" stroke-width="2.3" d="M3.55 7 V24.6 Q3.55 26.9 5.8 26.9 H19.7 Q21.95 26.9 21.95 24.6 V7"/>
 <path stroke="#333" stroke-width="2.4" stroke-linecap="round" d="M8 12 V21.7 M12.5 12 V21.7 M17 12 V21.7"/>
</svg>
</body></html>
